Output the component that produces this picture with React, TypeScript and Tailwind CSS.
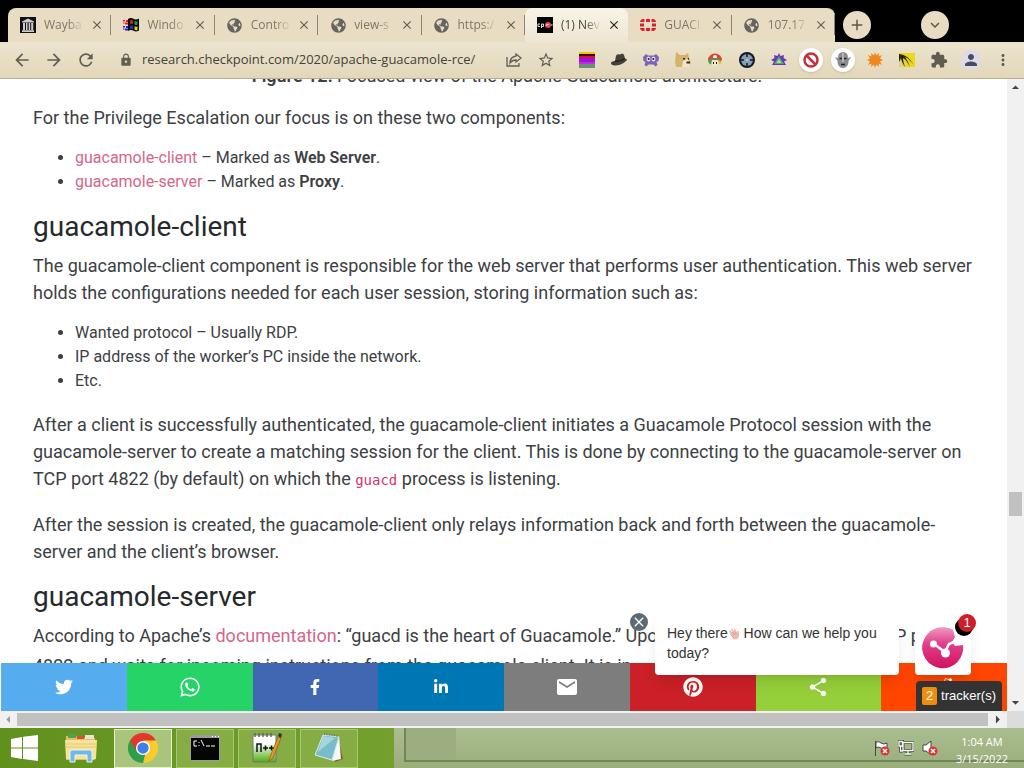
import React from 'react';
import {
  MdArrowBack,
  MdArrowForward,
  MdRefresh,
  MdLock,
  MdStarBorder,
  MdExtension,
  MdPerson,
  MdMoreVert,
  MdEmail,
  MdShare,
  MdClose,
  MdAdd,
  MdKeyboardArrowDown,
  MdArrowDropDown,
  MdArrowDropUp,
  MdArrowLeft,
  MdArrowRight,
} from 'react-icons/md';
import {
  FaTwitter,
  FaWhatsapp,
  FaFacebookF,
  FaLinkedinIn,
  FaPinterest,
  FaRedditAlien,
  FaGlobeAmericas,
} from 'react-icons/fa';

function Globe() {
  return <FaGlobeAmericas className="size-[15px] text-[#666460]" />;
}

function ArchiveIcon() {
  return (
    <svg viewBox="0 0 16 16" className="size-4">
      <rect width="16" height="16" fill="#111" />
      <path d="M2 4.5 8 1.5l6 3v1H2zM3 6h2v7H3zM6 6h1.5v7H6zM8.7 6h1.5v7H8.7zM11.2 6h2v7h-2zM2 13.3h12V15H2z" fill="#cfcdc9" />
    </svg>
  );
}

function WindowsFlag() {
  return (
    <svg viewBox="0 0 16 16" className="size-4">
      <path d="M5 2q3-2 6 0 2 1 5-.5v12q-3 1.500-5 .5-3-2-6 0z" fill="#0a0a0a" />
      <path d="M7 3.5q1.500-.8 3 0V7q-1.500-.8-3 0z" fill="#e11b1b" />
      <path d="M11.500 4q1.500.8 3 .2v3.500q-1.500.6-3-.2z" fill="#19a52b" />
      <path d="M7 8.800q1.500-.8 3 0v3.500q-1.500-.8-3 0z" fill="#1836d8" />
      <path d="M11.500 9.200q1.500.8 3 .2v3.500q-1.500.6-3-.2z" fill="#e8d114" />
      <path d="M0 3h2v1.500H0zM3 3h2v2H3zM0 5.500h1.500v1H0zM2 5.500h3v2H2z" fill="#d22" />
      <path d="M0 9h2v1.500H0zM3 9h2v2H3zM0 11.500h1.500v1H0zM2 11.500h3v2H2z" fill="#22c" />
    </svg>
  );
}

function CheckPointIcon() {
  return (
    <svg viewBox="0 0 16 16" className="size-4">
      <rect width="16" height="16" fill="#050505" />
      <path d="M3 7H1v2.500h2M4.500 11V7h2v2.500h-2" fill="none" stroke="#ddd" />
      <circle cx="11" cy="8" r="3" fill="#e04a63" />
      <path d="M9 8h1.500l1-1M14 8h1.500" stroke="#fff" fill="none" />
    </svg>
  );
}

function FortinetIcon() {
  return (
    <svg viewBox="0 0 16 16" className="size-4" fill="#d9222f">
      <path d="M6 2h4v3H6zM6 11h4v3H6zM0 6.500h4v3H0zM12 6.500h4v3h-4zM4.500 2v3H0q.5-3 3-3zM11.500 2v3H16q-.5-3-3-3zM4.500 14v-3H0q.5 3 3 3zM11.500 14v-3H16q-.5 3-3 3z" />
    </svg>
  );
}

const tabs = [
  { title: 'Wayba', icon: <ArchiveIcon /> },
  { title: 'Windo', icon: <WindowsFlag /> },
  { title: 'Contro', icon: <Globe /> },
  { title: 'view-s', icon: <Globe /> },
  { title: 'https:/', icon: <Globe /> },
  { title: '(1) Nev', icon: <CheckPointIcon />, active: true },
  { title: 'GUACI', icon: <FortinetIcon /> },
  { title: '107.17', icon: <Globe /> },
];

function TabStrip() {
  return (
    <div className="flex h-[42px] items-end bg-black pl-2">
      <div className="grid h-[34px] w-[827px] grid-cols-8 rounded-t-lg bg-[#e8ddc2]">
        {tabs.map((tab) => (
          <div
            key={tab.title}
            className={
              tab.active
                ? 'flex items-center rounded-t-lg bg-gradient-to-b from-[#f8f4e8] to-[#eee6d1] pl-3'
                : 'flex items-center rounded-t-lg pl-3'
            }
          >
            <span className="flex w-4 shrink-0 justify-center">{tab.icon}</span>
            <button
              className={
                tab.active
                  ? 'ml-2 w-10 whitespace-nowrap text-left text-xs text-[#46433c] [mask-image:linear-gradient(to_right,black_60%,transparent)]'
                  : 'ml-2 w-10 whitespace-nowrap text-left text-xs text-[#7d7768] [mask-image:linear-gradient(to_right,black_60%,transparent)]'
              }
            >
              {tab.title}
            </button>
            <button aria-label={`Close ${tab.title}`} className="ml-[6px]">
              <MdClose className={tab.active ? 'size-[14px] text-[#222]' : 'size-[14px] text-[#625e52]'} />
            </button>
            <span className={tab.active ? 'hidden' : 'ml-auto h-5 w-px bg-[#8d8672]'} />
          </div>
        ))}
      </div>
      <button aria-label="New tab" className="mb-[3px] ml-2 flex size-7 shrink-0 items-center justify-center rounded-full bg-[#e8ddc2] text-[#5c5748]">
        <MdAdd className="size-[18px]" />
      </button>
      <button aria-label="Search tabs" className="mb-[3px] ml-[50px] flex size-7 shrink-0 items-center justify-center rounded-full bg-[#e8ddc2] text-[#5c5748]">
        <MdKeyboardArrowDown className="size-[18px]" />
      </button>
    </div>
  );
}

function FlagExt() {
  return (
    <svg viewBox="0 0 16 16" className="size-4">
      <rect width="16" height="16" fill="#a011d6" />
      <path d="M0 0h16v2H0z" fill="#f3c500" />
      <path d="M0 2h16v3H0z" fill="#3a0610" />
      <path d="M0 4h16v2H0z" fill="#d0104c" />
      <path d="M0 10h16v2H0z" fill="#c926e8" />
      <path d="M0 12h16v4H0z" fill="#69906f" />
    </svg>
  );
}

function HatExt() {
  return (
    <svg viewBox="0 0 16 16" className="size-4">
      <path d="M4 9 5 4q.5-1.500 2-1.800l2 .3 2-1q1.500 0 2 1.500l1 3.500 1.500.5q1 1-1 2.500Q10 13.500 4 13.500q-4-.3-4-2.300 0-2 4-2.200z" fill="#45403a" />
      <path d="M4 9q5 1 9.700-2.500" stroke="#26221e" strokeWidth="1.500" fill="none" />
    </svg>
  );
}

function MonsterExt() {
  return (
    <svg viewBox="0 0 16 16" className="size-4">
      <path d="m3 2 2 1.500h6L13 2l3 3-.5 4-2 1 1 3-2 1.500-2-2H5.500l-2 2-2-1.500 1-3-2-1L0 5z" fill="#7c63b5" />
      <ellipse cx="5.500" cy="7" rx="2" ry="2.500" fill="#e3dcf2" />
      <ellipse cx="10.500" cy="7" rx="2" ry="2.500" fill="#e3dcf2" />
      <circle cx="5.700" cy="7" r="1" fill="#222" />
      <circle cx="10.300" cy="7" r="1" fill="#222" />
    </svg>
  );
}

function DogeExt() {
  return (
    <svg viewBox="0 0 16 16" className="size-4">
      <path d="m1 0 4 3h5l3-2 1.500 6 1.500 4-3 4H1L0 10z" fill="#d5b36c" />
      <path d="m8 9 4-2 3 3-1 5H7z" fill="#f0e6cd" />
      <path d="M11.500 9.500h3.500v2h-3.500zM8 6h2v1.500H8zM13 6h1v1.500h-1z" fill="#332a1c" />
    </svg>
  );
}

function MushroomExt() {
  return (
    <svg viewBox="0 0 16 16" className="size-4">
      <path d="M1 8a7 6.500 0 0 1 14 0z" fill="#df4536" />
      <path d="M1 8q0 4 4 5l1-5z" fill="#49a34c" />
      <path d="M15 8q0 4-4 5l-1-5z" fill="#f0c02f" />
      <path d="M5 8h6l1 5q-4 3-8 0z" fill="#eee4d3" />
      <circle cx="8" cy="5" r="2" fill="#f5f3ee" />
      <path d="M2 9q6-5 12 0" stroke="#49a34c" strokeWidth="1.500" fill="none" />
      <path d="M6.500 10v2M9.500 10v2" stroke="#222" />
    </svg>
  );
}

function TargetExt() {
  return (
    <svg viewBox="0 0 16 16" className="size-4">
      <circle cx="8" cy="8" r="8" fill="#14181e" />
      <circle cx="8" cy="8" r="6" fill="#7f9fc4" />
      <path d="M8 1v14M1 8h14" stroke="#14181e" strokeWidth="1.500" />
      <path d="M8 5v6M5 8h6" stroke="#fff" />
    </svg>
  );
}

function SpikyExt() {
  return (
    <svg viewBox="0 0 16 16" className="size-4">
      <path d="m8 1 1.500 3L13 3l-.5 3L16 8l-3 1.500L15 13H1l2-3.500L0 8l3.500-2L3 3l3.500 1z" fill="#6b35b5" />
      <path d="m8 4 5 8H3z" fill="#3fa7a4" />
      <path d="m8 7 2.500 4h-5z" fill="#ecd432" />
    </svg>
  );
}

function NoEntryExt() {
  return (
    <svg viewBox="0 0 24 24" className="size-6 rounded-full bg-white shadow">
      <circle cx="12" cy="12" r="6.500" fill="none" stroke="#c5303b" strokeWidth="2.500" />
      <path d="m7.500 7.500 9 9" stroke="#c5303b" strokeWidth="2.500" />
    </svg>
  );
}

function MaskExt() {
  return (
    <svg viewBox="0 0 24 24" className="size-6 rounded-full bg-white shadow">
      <path d="M4 9l3 1q0-6 5-6t5 6l3-1-2.500 4q0 7-5.500 7t-5.500-7z" fill="#8c8c8c" />
      <path d="M8.500 10.500h2.500M13 10.500h2.500M10 16.500h4" stroke="#222" strokeWidth="1.500" />
      <path d="M12 5v9" stroke="#c4c4c4" strokeWidth="1.500" />
    </svg>
  );
}

function SplatExt() {
  return (
    <svg viewBox="0 0 16 16" className="size-4">
      <path
        d="m8 0 1.200 3.500L12 1l-.5 3.500L15 3l-2 3.500 3 1.500-3 1.500 2 3.500-3.500-1.500L12 15l-2.800-2.500L8 16l-1.200-3.500L4 15l.5-3.500L1 13l2-3.500L0 8l3-1.500L1 3l3.500 1.500L4 1l2.800 2.500z"
        fill="#f0861c"
      />
    </svg>
  );
}

function BananaExt() {
  return (
    <svg viewBox="0 0 16 16" className="size-4">
      <path d="M0 1h16v14H0z" fill="#ecd81b" />
      <path d="M0 8h4v7H0z" fill="#d9cf9a" />
      <path d="M0 2q8 0 15 11Q8 5 6 5q3 4 5 10Q7 7 4 6q0 4 2 9Q2 9 2 6L0 10z" fill="#27250f" />
    </svg>
  );
}

const extensions = [
  { label: 'Flag', icon: <FlagExt /> },
  { label: 'Hat', icon: <HatExt /> },
  { label: 'Monster', icon: <MonsterExt /> },
  { label: 'Doge', icon: <DogeExt /> },
  { label: 'Mushroom', icon: <MushroomExt /> },
  { label: 'Target', icon: <TargetExt /> },
  { label: 'Spiky', icon: <SpikyExt /> },
  { label: 'Blocker', icon: <NoEntryExt /> },
  { label: 'Mask', icon: <MaskExt /> },
  { label: 'Splat', icon: <SplatExt /> },
  { label: 'Banana', icon: <BananaExt /> },
  { label: 'Extensions', icon: <MdExtension className="size-[18px] text-[#5f5c50]" /> },
  {
    label: 'Profile',
    icon: (
      <span className="flex size-5 items-center justify-center rounded-full bg-[#dcdbe6]">
        <MdPerson className="size-[18px] text-[#474c66]" />
      </span>
    ),
  },
  { label: 'Menu', icon: <MdMoreVert className="size-[18px] text-[#5f5c50]" /> },
];

function Toolbar() {
  return (
    <div className="flex h-[37px] items-center border-b border-[#b9ad8b] bg-gradient-to-b from-[#ece4cf] to-[#e3d7b9] pl-3 text-[#615d50]">
      <div className="flex items-center gap-3">
        <button aria-label="Back"><MdArrowBack className="size-5" /></button>
        <button aria-label="Forward"><MdArrowForward className="size-5" /></button>
        <button aria-label="Reload"><MdRefresh className="size-5" /></button>
      </div>
      <MdLock className="ml-[23px] size-[14px] shrink-0" />
      <input
        aria-label="Address"
        defaultValue="research.checkpoint.com/2020/apache-guacamole-rce/"
        className="ml-[9px] min-w-0 flex-1 bg-transparent text-[13px] text-[#45423a] outline-none"
      />
      <button aria-label="Share" className="shrink-0">
        <svg viewBox="0 0 16 16" className="size-4" fill="none" stroke="currentColor" strokeWidth="1.300">
          <path d="M1 5v9h12v-3M10 2l5 4-5 4V8q-4 0-6 3 0-6 6-7z" />
        </svg>
      </button>
      <button aria-label="Bookmark" className="ml-[15px] shrink-0"><MdStarBorder className="size-[18px]" /></button>
      <div className="ml-4 mr-[5px] flex shrink-0">
        {extensions.map((ext) => (
          <button key={ext.label} aria-label={ext.label} className="flex w-8 items-center justify-center">
            {ext.icon}
          </button>
        ))}
      </div>
    </div>
  );
}

function Article() {
  return (
    <article className="min-h-0 flex-1 overflow-hidden pl-[33px] font-[Roboto,sans-serif] text-lg leading-[27px] text-[#3c4043]">
      <p className="-mt-[17px] pr-[26px] text-center">
        <strong className="font-semibold">Figure 12:</strong> Focused view of the Apache Guacamole architecture.
      </p>
      <p className="mt-[15px]">For the Privilege Escalation our focus is on these two components:</p>
      <ul className="mt-[15px] list-disc pl-[42px] text-base leading-6">
        <li><a href="#client" className="text-[#d4668a]">guacamole-client</a> – Marked as <strong className="font-semibold">Web Server</strong>.</li>
        <li><a href="#server" className="text-[#d4668a]">guacamole-server</a> – Marked as <strong className="font-semibold">Proxy</strong>.</li>
      </ul>
      <h2 id="client" className="mt-4 text-[28px] leading-[34px] text-[#26292c]">guacamole-client</h2>
      <p className="mt-2">
        The guacamole-client component is responsible for the web server that performs user authentication. This web server
        <br />
        holds the configurations needed for each user session, storing information such as:
      </p>
      <ul className="mt-[15px] list-disc pl-[42px] text-base leading-6">
        <li>Wanted protocol – Usually RDP.</li>
        <li>IP address of the worker’s PC inside the network.</li>
        <li>Etc.</li>
      </ul>
      <p className="mt-[18px]">
        After a client is successfully authenticated, the guacamole-client initiates a Guacamole Protocol session with the
        <br />
        guacamole-server to create a matching session for the client. This is done by connecting to the guacamole-server on
        <br />
        TCP port 4822 (by default) on which the{' '}
        <code className="font-['DejaVu_Sans_Mono',monospace] text-sm text-[#d6336c]">guacd</code> process is listening.
      </p>
      <p className="mt-[19px]">
        After the session is created, the guacamole-client only relays information back and forth between the guacamole-
        <br />
        server and the client’s browser.
      </p>
      <h2 id="server" className="mt-[15px] text-[28px] leading-[34px] text-[#26292c]">guacamole-server</h2>
      <p className="mt-[7px] leading-[30px] whitespace-nowrap">
        According to Apache’s <a href="#documentation" className="text-[#d4668a]">documentation</a>: “guacd is the heart of Guacamole.” Upon startup, guacd listens on TCP p
        <br />
        4822 and waits for incoming instructions from the guacamole-client. It is in
      </p>
    </article>
  );
}

function ShareBar() {
  return (
    <nav className="grid h-12 shrink-0 grid-cols-8 pl-px text-white *:flex *:items-center *:justify-center">
      <a href="#twitter" aria-label="Twitter" className="bg-[#55acee]"><FaTwitter className="size-[18px]" /></a>
      <a href="#whatsapp" aria-label="WhatsApp" className="bg-[#25d366]"><FaWhatsapp className="size-[22px]" /></a>
      <a href="#facebook" aria-label="Facebook" className="bg-[#4267b2]"><FaFacebookF className="size-4" /></a>
      <a href="#linkedin" aria-label="LinkedIn" className="bg-[#0077b5]"><FaLinkedinIn className="size-4" /></a>
      <a href="#email" aria-label="Email" className="bg-[#7d7d7d]"><MdEmail className="size-6" /></a>
      <a href="#pinterest" aria-label="Pinterest" className="bg-[#cb2027]"><FaPinterest className="size-5" /></a>
      <a href="#share" aria-label="Share" className="bg-[#95d03a]"><MdShare className="size-[22px]" /></a>
      <a href="#reddit" aria-label="Reddit" className="bg-[#ff4500]"><FaRedditAlien className="size-5" /></a>
    </nav>
  );
}

function WaveHand() {
  return (
    <svg viewBox="0 0 12 12" className="inline size-3">
      <path d="m1 3 1-1 3 3-2-4 1-.5 3 4L6 1l1-.3 2 4 .5-2 1.200.3.5 4-1 3-2 1.500-3-.5z" fill="#efb6ae" />
      <path d="m4 4 3 3M6 3l2 3M2 6l4 4" stroke="#dc8f88" strokeWidth=".6" />
    </svg>
  );
}

function ChatWidget() {
  return (
    <>
      <div className="absolute right-[108px] bottom-9 h-[58px] w-[244px] rounded bg-white px-3 py-[6px] font-['Liberation_Sans',sans-serif] text-sm leading-5 text-[#333] shadow-lg">
        Hey there<WaveHand /> How can we help you today?
        <button aria-label="Dismiss" className="absolute -top-1 -left-[25px] flex size-[18px] items-center justify-center rounded-full bg-[#5c6b73] text-white">
          <MdClose className="size-4" />
        </button>
      </div>
      <button aria-label="Open chat" className="absolute right-9 bottom-9 flex size-14 items-center justify-center rounded bg-white shadow-lg">
        <svg viewBox="0 0 44 44" className="size-11">
          <defs>
            <linearGradient id="pink" x1="0" y1="0" x2="0" y2="1">
              <stop offset="0" stopColor="#f09ac0" />
              <stop offset=".4" stopColor="#e03f8c" />
              <stop offset="1" stopColor="#d3125f" />
            </linearGradient>
          </defs>
          <path d="M32 5A20.500 20.500 0 1 0 42 20l-8 1-3-4 3-5z" fill="url(#pink)" />
          <path d="m13 19 11 8 4-8 5-2" fill="none" stroke="#fff" strokeWidth="2.500" />
          <circle cx="12.500" cy="19" r="3.500" fill="#fff" />
          <circle cx="24.500" cy="28" r="4.500" fill="#fff" />
        </svg>
        <span className="absolute -top-px -right-[2px] size-[18px] rounded-full bg-black" />
        <span className="absolute -top-[5px] -right-[5px] flex size-[18px] items-center justify-center rounded-full bg-[#cc1f2a] font-['Liberation_Sans',sans-serif] text-[13px] text-white">1</span>
      </button>
      <div className="absolute right-[5px] bottom-0 flex h-[30px] items-center gap-1 rounded-t bg-[#333] px-[6px] font-['Liberation_Sans',sans-serif] text-[13px] text-white">
        <span className="flex h-[18px] w-[15px] items-center justify-center rounded-xs bg-[#ee8d0c]">2</span>
        tracker(s)
      </div>
    </>
  );
}

function ChromeLogo() {
  return (
    <svg viewBox="0 0 32 32" className="size-[30px]">
      <path d="M16 16 2.140 8A16 16 0 0 1 29.860 8z" fill="#e2382c" />
      <path d="M16 16V32A16 16 0 0 1 2.140 8z" fill="#2f9e4b" />
      <path d="M16 8h13.860A16 16 0 0 1 16 32l6.500-12z" fill="#fbcb2c" />
      <path d="M2.140 8 9.500 20 16 8z" fill="#e2382c" />
      <path d="M9.500 20 16 32l6.500-12z" fill="#2f9e4b" />
      <path d="M16 32l7-12h-4z" fill="#fbcb2c" />
      <circle cx="16" cy="16" r="7.500" fill="#fff" />
      <circle cx="16" cy="16" r="6" fill="#3f7fe8" />
    </svg>
  );
}

function CmdIcon() {
  return (
    <svg viewBox="0 0 30 26" className="h-[26px] w-[30px]">
      <rect width="30" height="26" fill="#9b9b9b" />
      <path d="M1 3h28v22H1z" fill="#050505" />
      <path d="M22 1h1v1h-1zM25 1h1v1h-1zM28 1h1v1h-1z" fill="#fff" />
      <path d="M7 6H4v5h3M9 7v1M9 10v1M11 5l3 6M16 11h4M21 11h4" stroke="#fff" fill="none" />
    </svg>
  );
}

function NppIcon() {
  return (
    <svg viewBox="0 0 30 32" className="h-8 w-[30px]">
      <defs>
        <linearGradient id="npp" x1="0" y1="0" x2="0" y2="1">
          <stop offset=".3" stopColor="#fff" />
          <stop offset="1" stopColor="#4fae10" />
        </linearGradient>
      </defs>
      <path d="M1 3h23v27H1z" fill="url(#npp)" stroke="#777" />
      <path d="M3 1v4M7 1v4M11 1v4M15 1v4M19 1v4" stroke="#666" strokeWidth="1.500" />
      <path d="M5 20v-8h4v8M11 16h5M13.500 13.500v5M17 16h5M19.500 13.500v5" stroke="#111" strokeWidth="1.500" fill="none" />
      <path d="m18 25 8-20 3 1-8 20-4 3z" fill="#e39a24" stroke="#8a5a18" strokeWidth=".7" />
      <path d="m26 4 1-3 3 1-1 4z" fill="#333" />
    </svg>
  );
}

function NotepadIcon() {
  return (
    <svg viewBox="0 0 32 30" className="h-[30px] w-8">
      <path d="m25 4 5 22-8 3z" fill="#8d5630" />
      <path d="m26 3 2 23-9 2z" fill="#f4f7f8" />
      <path d="M10 2 26 4 19 27 2 22z" fill="#77bdc9" stroke="#d8edf0" />
      <path d="M10 3 22 5 5 19z" fill="#b9e0e6" opacity=".7" />
      <path d="m11 1 15 2" stroke="#777" strokeDasharray="1 1.500" strokeWidth="2" />
    </svg>
  );
}

function ExplorerIcon() {
  return (
    <svg viewBox="0 0 34 30" className="h-[30px] w-[34px]">
      <path d="M2 3h10l2 2h17v22H2z" fill="#e3c05f" />
      <path d="M4 1h8v4H4z" fill="#4ca354" />
      <path d="M13 3h7v3h-7z" fill="#d55039" />
      <path d="M21 2h9v4h-9z" fill="#e8e3d5" />
      <path d="M1 7h32l-1 19H2z" fill="#f7e39b" />
      <path d="M2 11h30M2 14h30" stroke="#e6c76c" />
      <path d="M6 29V19q0-2 2-2h18q2 0 2 2v10h-5v-7H11v7z" fill="#6fb9e8" stroke="#e6f4fb" />
    </svg>
  );
}

function WindowsLogo() {
  return (
    <svg viewBox="0 0 27 26" className="h-[26px] w-[27px]" fill="#fff">
      <path d="m0 4 11-2v10.500H0zM12 1.800 27 0v12.500H12zM0 13.500h11V24L0 22zM12 13.500h15V26l-15-2z" />
    </svg>
  );
}

function Taskbar() {
  return (
    <footer className="flex h-10 shrink-0 bg-gradient-to-b from-[#abbd8e] to-[#9aae7c]">
      <div className="flex shrink-0 items-center gap-1 bg-gradient-to-r from-[#61911c] to-[#74a12d] pr-9">
        <button aria-label="Start" className="flex h-10 w-12 items-center justify-center"><WindowsLogo /></button>
        <button aria-label="File Explorer" className="flex h-10 w-[58px] items-center justify-center"><ExplorerIcon /></button>
        <button aria-label="Chrome" className="flex h-[39px] w-[58px] items-center justify-center border border-[#e6efd3] bg-[#a9c47b]"><ChromeLogo /></button>
        <button aria-label="Command Prompt" className="flex h-[39px] w-[58px] items-center justify-center border border-[#a8c873] bg-[#85ad44]"><CmdIcon /></button>
        <button aria-label="Notepad++" className="flex h-[39px] w-[58px] items-center justify-center border border-[#a8c873] bg-[#85ad44]"><NppIcon /></button>
        <button aria-label="Notepad" className="flex h-[39px] w-[58px] items-center justify-center border border-[#a8c873] bg-[#85ad44]"><NotepadIcon /></button>
      </div>
      <div className="ml-[10px] min-w-0 flex-1">
        <div className="flex h-[34px] border-b-2 border-l-2 border-[#71845a]">
          <div className="w-[50px] bg-[#9cae80]" />
        </div>
      </div>
      <div className="h-[34px] shrink-0 border-b-2 border-[#71845a]">
        <div className="flex items-start pr-4">
          <div className="mt-3 flex gap-2">
            <button aria-label="Action Center">
              <svg viewBox="0 0 16 16" className="size-4">
                <path d="M1.500 1v15M2 2q3-1 5 1t6 0v6q-3 1-6-1T2 8z" fill="#fff" stroke="#444" />
                <circle cx="11" cy="11" r="4.500" fill="#d33" />
                <path d="m9 9 4 4m0-4-4 4" stroke="#fff" strokeWidth="1.500" />
              </svg>
            </button>
            <button aria-label="Network">
              <svg viewBox="0 0 16 16" className="size-4">
                <path d="M5 2.500h10v8H5zM10 10.500V14M6.500 14h7M2.500 6v5H5M1 1.500h3.500V6H1z" fill="none" stroke="#3f4a32" strokeWidth="3" />
                <path d="M5 2.500h10v8H5zM10 10.500V14M6.500 14h7M2.500 6v5H5M1 1.500h3.500V6H1z" fill="none" stroke="#fff" strokeWidth="1.300" />
              </svg>
            </button>
            <button aria-label="Volume">
              <svg viewBox="0 0 16 16" className="size-4">
                <path d="M1 5h3l5-4v14l-5-4H1z" fill="#fff" stroke="#444" />
                <circle cx="11" cy="11" r="4.500" fill="#d33" />
                <path d="m9 9 4 4m0-4-4 4" stroke="#fff" strokeWidth="1.500" />
              </svg>
            </button>
          </div>
          <div className="ml-[18px] pt-[5px] text-center text-[11px] leading-[17px] text-white">
            <div>1:04 AM</div>
            <div>3/15/2022</div>
          </div>
        </div>
      </div>
    </footer>
  );
}

export default function App() {
  return (
    <div className="flex h-screen flex-col overflow-hidden bg-white font-['Open_Sans','Noto_Sans',sans-serif]">
      <TabStrip />
      <Toolbar />
      <div className="flex min-h-0 flex-1">
        <main className="relative flex min-w-0 flex-1 flex-col">
          <Article />
          <ShareBar />
          <ChatWidget />
        </main>
        <div className="flex w-[17px] shrink-0 flex-col items-center bg-[#f1f1f1] text-[#444]">
          <MdArrowDropUp className="size-[17px]" />
          <div className="flex-[396]" />
          <div className="h-6 w-[13px] bg-[#c1c1c1]" />
          <div className="flex-[178]" />
          <MdArrowDropDown className="size-[17px]" />
        </div>
      </div>
      <div className="flex h-[17px] shrink-0 items-center bg-[#f1f1f1]">
        <MdArrowLeft className="size-[17px] text-[#999]" />
        <div className="h-[13px] flex-1 bg-[#c1c1c1]" />
        <MdArrowRight className="size-[19px] text-[#444]" />
        <div className="h-full w-[17px] bg-[#dcdcdc]" />
      </div>
      <Taskbar />
    </div>
  );
}
